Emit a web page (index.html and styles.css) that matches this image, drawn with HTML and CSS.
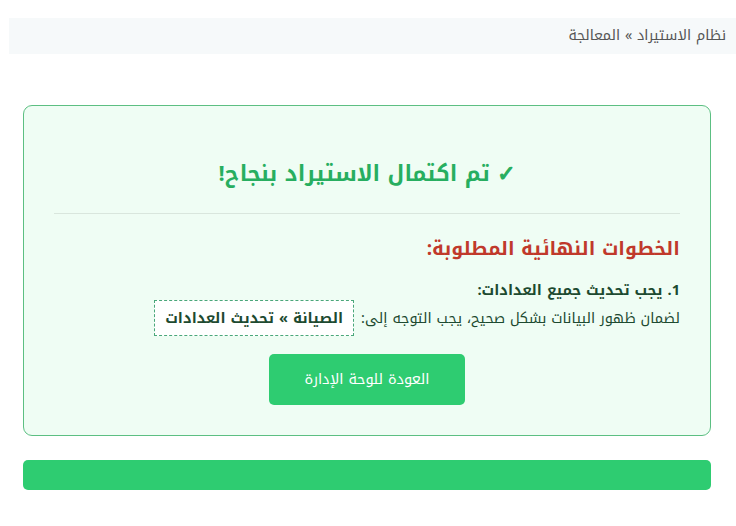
FILE: index.html
```html
<!DOCTYPE html>
<html lang="ar" dir="rtl">
<head>
<meta charset="utf-8">
<link rel="stylesheet" href="styles.css">
</head>
<body>
<div class="crumb">نظام الاستيراد » المعالجة</div>
<div class="wrap">
  <div class="card">
    <h2 class="title"><span class="check">✓</span> تم اكتمال الاستيراد بنجاح!</h2>
    <hr class="sep">
    <h3 class="sub">الخطوات النهائية المطلوبة:</h3>
    <div class="step">
      <div class="step-title">1. يجب تحديث جميع العدادات:</div>
      <div class="step-text">لضمان ظهور البيانات بشكل صحيح، يجب التوجه إلى: <span class="code">الصيانة » تحديث العدادات</span></div>
    </div>
    <div class="actions"><a class="btn">العودة للوحة الإدارة</a></div>
  </div>
  <div class="bar"></div>
</div>
</body>
</html>
```
FILE: styles.css
```css
html, body { margin: 0; padding: 0; background: #fff; }
body { font-family: "Noto Kufi Arabic", "DejaVu Sans", sans-serif; padding: 18px 0 0 9px; }
.crumb {
  background: #f6f9fa;
  height: 36px;
  line-height: 36px;
  padding: 0 10px;
  font-size: 14.3px;
  color: #555;
}
.wrap { padding: 51px 25px 0 14px; }
.card {
  background: #effdf4;
  border: 1px solid #5cbf82;
  border-radius: 9px;
  padding: 0 30px 30px 30px;
}
.title {
  margin: 0;
  padding: 53px 0 0;
  text-align: center;
  color: #27ae60;
  font-size: 21.8px;
  line-height: 30px;
  font-weight: bold;
}
.check {
  font-family: "DejaVu Sans", sans-serif;
  font-weight: bold;
  -webkit-text-stroke: 1.2px #27ae60;
}
.sep { border: 0; border-top: 1px solid #d9e6dd; margin: 24px 0 21px; }
.sub { margin: 0; color: #c0392b; font-size: 19px; line-height: 28px; font-weight: bold; }
.step { margin-top: 17px; color: #1d4a30; }
.step-title { font-weight: bold; font-size: 14.6px; line-height: 20px; }
.step-text { font-size: 14.4px; line-height: 34px; }
.code {
  display: inline-block;
  border: 1px dashed #4aa77a;
  background: #fff;
  padding: 0 10px;
  line-height: 34px;
  font-weight: bold;
  font-size: 14.6px;
  margin-right: 2px;
}
.actions { text-align: center; margin-top: 18px; }
.btn {
  display: inline-block;
  background: #2ecc71;
  color: #fff;
  width: 196px;
  height: 51px;
  line-height: 51px;
  border-radius: 5px;
  font-size: 14.5px;
}
.bar { background: #2ecc71; height: 30px; border-radius: 5px; margin-top: 24px; }
```
